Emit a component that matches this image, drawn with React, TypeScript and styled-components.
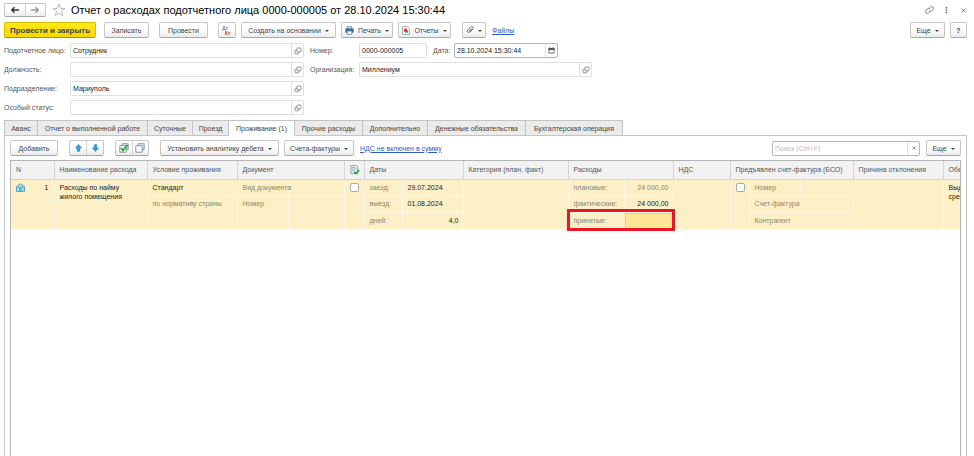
import React from 'react';
import styled, { createGlobalStyle, css } from 'styled-components';

const Global = createGlobalStyle`
  * { box-sizing: border-box; }
  html, body { margin: 0; background: #fff; }
  body, button, input { font-family: "Liberation Sans", Arial, sans-serif; font-size: 7px; line-height: 9px; color: #444; }
  svg { display: block; flex: none; }
`;

const Page = styled.main`
  display: flex;
  flex-direction: column;
  min-height: 100vh;
  padding: 0 7px 0 4px;
  overflow: hidden;
`;

const TitleBar = styled.header`
  display: flex;
  align-items: center;
  height: 20px;
  margin-bottom: 2px;
`;

const Title = styled.h1`
  margin: 0 0 0 5px;
  font-size: 11px;
  line-height: 14px;
  font-weight: 400;
  color: #000;
  white-space: nowrap;
`;

const Spacer = styled.div`
  flex: 1;
`;

const PlainButton = styled.button`
  display: flex;
  align-items: center;
  justify-content: center;
  width: 17px;
  height: 14px;
  padding: 0;
  border: 0;
  background: none;
`;

const WindowActions = styled.div`
  display: flex;
  margin-right: -5px;
`;

const Toolbar = styled.div`
  display: flex;
  align-items: center;
  height: 16px;
`;

const Button = styled.button<{ $w: number; $gap?: number; $primary?: boolean }>`
  display: flex;
  align-items: center;
  justify-content: center;
  gap: 4px;
  min-width: ${p => p.$w}px;
  height: 16px;
  margin: 0 ${p => p.$gap ?? 0}px 0 0;
  padding: 0;
  border: 1px solid #c6c6c6;
  border-bottom-color: #a8a8a8;
  border-radius: 2px;
  background: linear-gradient(#fff 40%, #ececec);
  white-space: nowrap;
  ${p => p.$primary && css`
    border-color: #d6bd00;
    border-bottom-color: #a89400;
    background: linear-gradient(#ffe817, #f5d900);
    font-size: 8px;
    font-weight: 700;
  `}
`;

const ButtonPair = styled.div<{ $w: number; $gap: number; $h?: number }>`
  display: flex;
  width: ${p => p.$w}px;
  height: ${p => p.$h ?? 16}px;
  margin-right: ${p => p.$gap}px;
  border: 1px solid #c6c6c6;
  border-bottom-color: #a8a8a8;
  border-radius: 2px;
  background: linear-gradient(#fff 40%, #ececec);
`;

const PairButton = styled.button`
  display: flex;
  flex: 1;
  align-items: center;
  justify-content: center;
  padding: 0;
  border: 0;
  background: none;
  & + & { border-left: 1px solid #d4d4d4; }
`;

const Caret = styled.span`
  width: 0;
  height: 0;
  margin-top: 1px;
  border: 2px solid transparent;
  border-top-color: #444;
  border-bottom: 0;
`;

const Link = styled.a`
  color: #2a5db8;
  text-decoration: underline;
  white-space: nowrap;
`;

const Form = styled.form`
  display: grid;
  row-gap: 4px;
  margin: 5px 0;
`;

const FormRow = styled.div`
  display: flex;
  align-items: center;
  height: 15px;
`;

const Label = styled.label<{ $w: number }>`
  width: ${p => p.$w}px;
  flex: none;
  color: #555;
  white-space: nowrap;
`;

const FieldBox = styled.div<{ $w: number; $strong?: boolean }>`
  display: flex;
  width: ${p => p.$w}px;
  height: 15px;
  margin-right: 6px;
  border: 1px solid ${p => (p.$strong ? '#b4b4b4' : '#dedede')};
  border-radius: 2px;
  background: #fff;
`;

const TextInput = styled.input`
  flex: 1;
  min-width: 0;
  padding: 0 2px;
  border: 0;
  outline: 0;
  background: none;
  color: #222;
  &::placeholder { color: #bbb; opacity: 1; }
`;

const FieldButton = styled.button`
  display: flex;
  align-items: center;
  justify-content: center;
  width: 12px;
  padding: 0;
  border: 0;
  border-left: 1px solid #dedede;
  background: none;
`;

const Tabs = styled.div`
  display: flex;
  height: 16px;
  margin-bottom: -1px;
  z-index: 1;
`;

const Tab = styled.button<{ $w: number; $active?: boolean }>`
  width: ${p => p.$w}px;
  padding: 0;
  border: 1px solid #c4c4c4;
  border-left-width: 0;
  background: ${p => (p.$active ? '#fff' : '#ebebeb')};
  border-bottom-color: ${p => (p.$active ? '#fff' : '#c4c4c4')};
  white-space: nowrap;
  &:first-child { border-left-width: 1px; }
`;

const Panel = styled.section`
  display: flex;
  flex: 1;
  flex-direction: column;
  padding: 4px 5px 0;
  border: 1px solid #c4c4c4;
  border-bottom: 0;
`;

const TableFrame = styled.div`
  flex: 1;
  margin-top: 4px;
  overflow: hidden;
  border: 1px solid #b4b4b4;
  border-bottom: 0;
`;

const Table = styled.table`
  width: 100%;
  border-collapse: collapse;
  table-layout: fixed;
`;

const Th = styled.th`
  height: 18px;
  padding: 0 0 0 5px;
  border-right: 1px solid #d6d6d6;
  border-bottom: 1px solid #d0d0d0;
  background: #f2f2f2;
  font-weight: 400;
  text-align: left;
  color: #555;
  white-space: nowrap;
  &:last-child { border-right: 0; }
`;

const Td = styled.td`
  height: 49px;
  padding: 0;
  border-right: 1px solid #fffae8;
  border-bottom: 1px solid #fffae8;
  background: #fef0c6;
  vertical-align: top;
  &:last-child { border-right: 0; }
`;

const Lines = styled.div<{ $cols?: string }>`
  position: relative;
  display: grid;
  height: 49px;
  grid-template-columns: ${p => p.$cols ?? '1fr'};
  grid-template-rows: 16px 17px 16px;
`;

const Cell = styled.div<{ $dim?: boolean; $right?: boolean; $b?: boolean; $r?: boolean; $wide?: boolean; $tall?: number }>`
  padding: 3px 4px 0 5px;
  color: ${p => (p.$dim ? '#8d8468' : '#222')};
  text-align: ${p => (p.$right ? 'right' : 'left')};
  white-space: nowrap;
  ${p => p.$b && 'border-bottom: 1px solid #fffae8;'}
  ${p => p.$r && 'border-right: 1px solid #fffae8;'}
  ${p => p.$wide && 'grid-column: 1 / -1;'}
  ${p => p.$tall && `grid-row: span ${p.$tall};`}
`;

const EdgeCell = styled(Cell)`
  padding-right: 0;
`;

const Check = styled.input`
  appearance: none;
  display: block;
  width: 9px;
  height: 9px;
  margin: 0 auto;
  border: 1px solid #aaa;
  border-radius: 2px;
  background: #fff;
`;

const AmountInput = styled.input`
  width: 100%;
  min-width: 0;
  height: 16px;
  padding: 0 4px;
  border: 1px solid #f7cf45;
  outline: 0;
  background: #fee695;
  text-align: right;
`;

const Highlight = styled.div`
  position: absolute;
  left: -2px;
  right: -2px;
  bottom: -2px;
  height: 22px;
  border: 3px solid #ec1526;
  pointer-events: none;
`;

const NumberCell = styled.div`
  display: flex;
  justify-content: space-between;
  padding: 3px 5px 0;
  color: #222;
`;

const Arrow = ({ left, color }: { left?: boolean; color: string }) => (
  <svg width="10" height="8" viewBox="0 0 10 8" fill="none" stroke={color} strokeWidth="1.4">
    {left ? <path d="M9 4H2M4.5 1.2 1.7 4l2.8 2.8" /> : <path d="M1 4h7M5.5 1.2 8.3 4 5.5 6.8" />}
  </svg>
);
const Star = () => (
  <svg width="14" height="14" viewBox="0 0 14 14" fill="none" stroke="#aaa" strokeWidth=".8">
    <path d="M7 1l1.5 4.4H13L9.400 8.200l1.400 4.500L7 10l-3.800 2.700 1.400-4.500L1 5.400h4.500z" />
  </svg>
);
const OpenIcon = () => (
  <svg width="8" height="8" viewBox="0 0 8 8" fill="none" stroke="#777" strokeWidth=".8">
    <rect x="3" y="1" width="4" height="3.800" rx=".6" />
    <path d="M3 3.200H1.600a.6.600 0 0 0-.6.600V6.200a.6.600 0 0 0 .6.600h2.600a.6.600 0 0 0 .6-.6V4.800" />
  </svg>
);
const CalendarIcon = () => (
  <svg width="7" height="7" viewBox="0 0 7 7">
    <path d="M.9 1.500h5.200v4.600H.9z" fill="#fff" stroke="#555" strokeWidth=".8" />
    <path d="M.5 1h6v2h-6zM1.500.2h1v1h-1zM4.500.2h1v1h-1z" fill="#555" />
  </svg>
);
const ChainIcon = () => (
  <svg width="11" height="10" viewBox="0 0 24 24" fill="none" stroke="#777" strokeWidth="2.200">
    <path d="M10 14a5 5 0 0 0 7.500.5l3-3a5 5 0 0 0-7-7L12 6M14 10a5 5 0 0 0-7.500-.5l-3 3a5 5 0 0 0 7 7L12 18" />
  </svg>
);
const DotsIcon = () => (
  <svg width="3" height="8" viewBox="0 0 3 8" fill="#555">
    <path d="M.7 1h1.500v1.400H.7zM.7 3.400h1.500v1.400H.7zM.7 5.800h1.500v1.400H.7z" />
  </svg>
);
const CrossIcon = ({ size }: { size: number }) => (
  <svg width={size} height={size} viewBox="0 0 5 5" stroke="#666" strokeWidth=".9">
    <path d="M.6.6l3.800 3.800M4.400.6.600 4.400" />
  </svg>
);
const DebitIcon = () => (
  <svg width="10" height="11" viewBox="0 0 10 11" fontFamily="Liberation Sans" fontSize="5" fontWeight="700">
    <text x="0" y="5" fill="#4f8fb5">Дт</text>
    <text x="3" y="10" fill="#d2343a">Кт</text>
  </svg>
);
const PrinterIcon = () => (
  <svg width="9" height="9" viewBox="0 0 9 9">
    <path d="M2.200.7h4.600V3H2.200z" fill="#dbe7ef" stroke="#47718f" strokeWidth=".7" />
    <rect x=".3" y="2.500" width="8.400" height="4.200" rx=".9" fill="#3f6f92" />
    <path d="M2.200 5h4.600v3.300H2.200z" fill="#fff" stroke="#47718f" strokeWidth=".7" />
  </svg>
);
const ReportIcon = () => (
  <svg width="8" height="9" viewBox="0 0 8 9">
    <path d="M.5.5h5l2 2v6h-7z" fill="#fff" stroke="#8a9aa6" strokeWidth=".8" />
    <path d="M3 4.500h3.200v2.300H2.500z" fill="#4ea45a" />
    <path d="M2 2.500h2.600L5.600 5 2 6z" fill="#e03a34" />
  </svg>
);
const ClipIcon = () => (
  <svg width="8" height="8" viewBox="0 0 8 8" fill="none" stroke="#666" strokeWidth=".9">
    <path d="M6.300 3 3.500 6a1.300 1.300 0 0 1-2-1.800L4.600 1a1.500 1.500 0 0 1 2.300 2L4 6.400M5.300 2.500 2.700 5.200" />
  </svg>
);
const MoveIcon = ({ down }: { down?: boolean }) => (
  <svg width="7" height="8" viewBox="0 0 7 8" fill="#2d9bea" stroke="#1779bd" strokeWidth=".6">
    <path d={down ? 'M3.500 7.400.600 4h1.700V.700h2.400V4h1.700z' : 'M3.500.600.600 4h1.700v3.300h2.400V4h1.700z'} />
  </svg>
);
const StackIcon = ({ checked }: { checked?: boolean }) => (
  <svg width="10" height="10" viewBox="0 0 10 10" fill="#fff" stroke="#6d8798" strokeWidth=".8">
    <path d="M3 .7h6.200v6H3z" fill="#dce8ef" />
    <path d="M.8 2.700h6.400v6.500H.8z" />
    {checked && <path d="M2 5l2 2.500L8.500 2" fill="none" stroke="#29a62f" strokeWidth="1.800" />}
  </svg>
);
const SheetCheckIcon = () => (
  <svg width="10" height="10" viewBox="0 0 10 10" fill="none">
    <path d="M.900.600h5.500l1 1v7H.900z" fill="#eef5fa" stroke="#7089a0" strokeWidth=".8" />
    <path d="M2.300 2.500h2.500M2.300 4h3.500M2.300 5.500h2" stroke="#5c7ea0" strokeWidth=".7" />
    <path d="M4.200 6.600l1.900 2L9.200 5" stroke="#26a435" strokeWidth="1.600" />
  </svg>
);
const HouseIcon = () => (
  <svg width="9" height="9" viewBox="0 0 9 9">
    <path d="M.5 3.600 4.500.600l4 3v4.800h-8z" fill="#a9dcf1" stroke="#2b9bc6" strokeWidth=".8" />
    <path d="M1.500 4.200h6" stroke="#2b9bc6" strokeWidth=".7" />
    <path d="M3.200 5h2.600v3.400H3.200z" fill="#3ba6cf" />
    <path d="M4 6h1v1H4z" fill="#fff" />
  </svg>
);

type FieldProps = { id: string; label: string; value: string; labelW: number; w: number; icon?: React.ReactNode; strong?: boolean };
const Field = ({ id, label, value, labelW, w, icon, strong }: FieldProps) => (
  <>
    <Label htmlFor={id} $w={labelW}>{label}</Label>
    <FieldBox $w={w} $strong={strong}>
      <TextInput id={id} defaultValue={value} />
      {icon && <FieldButton type="button" aria-label={`Выбрать: ${label}`}>{icon}</FieldButton>}
    </FieldBox>
  </>
);

const tabs: [string, number][] = [
  ['Аванс', 34], ['Отчет о выполненной работе', 110], ['Суточные', 45], ['Проезд', 36], ['Проживание (1)', 66],
  ['Прочие расходы', 68], ['Дополнительно', 65], ['Денежные обязательства', 98], ['Бухгалтерская операция', 97],
];

const columns: [React.ReactNode, number?][] = [
  ['N', 43], ['Наименование расхода', 93], ['Условие проживания', 90], ['Документ', 107], [<SheetCheckIcon key="i" />, 20],
  ['Даты', 99], ['Категория (план, факт)', 105], ['Расходы', 105], ['НДС', 57], ['Предъявлен счет-фактура (БСО)', 123],
  ['Причина отклонения', 90], ['Обе'],
];

export default function App() {
  return (
    <Page>
      <Global />
      <TitleBar>
        <ButtonPair $w={42} $gap={6} $h={14}>
          <PairButton aria-label="Назад"><Arrow left color="#333" /></PairButton>
          <PairButton aria-label="Вперед"><Arrow color="#999" /></PairButton>
        </ButtonPair>
        <Star />
        <Title>Отчет о расходах подотчетного лица 0000-000005 от 28.10.2024 15:30:44</Title>
        <Spacer />
        <WindowActions>
          <PlainButton aria-label="Ссылка"><ChainIcon /></PlainButton>
          <PlainButton aria-label="Меню"><DotsIcon /></PlainButton>
          <PlainButton aria-label="Закрыть"><CrossIcon size={5} /></PlainButton>
        </WindowActions>
      </TitleBar>

      <Toolbar>
        <Button $w={92} $gap={8} $primary>Провести и закрыть</Button>
        <Button $w={45} $gap={10}>Записать</Button>
        <Button $w={49} $gap={10}>Провести</Button>
        <Button $w={18} $gap={5} aria-label="Показать проводки"><DebitIcon /></Button>
        <Button $w={95} $gap={5}>Создать на основании<Caret /></Button>
        <Button $w={52} $gap={5}><PrinterIcon />Печать<Caret /></Button>
        <Button $w={53} $gap={11}><ReportIcon />Отчеты<Caret /></Button>
        <Button $w={24} $gap={6} aria-label="Вложения"><ClipIcon /><Caret /></Button>
        <Link href="#files">Файлы</Link>
        <Spacer />
        <Button $w={35} $gap={5}>Еще<Caret /></Button>
        <Button $w={17}><b>?</b></Button>
      </Toolbar>

      <Form>
        <FormRow>
          <Field id="person" label="Подотчетное лицо:" value="Сотрудник" labelW={66} w={234} icon={<OpenIcon />} />
          <Field id="number" label="Номер:" value="0000-000005" labelW={49} w={68} />
          <Field id="date" label="Дата:" value="28.10.2024 15:30:44" labelW={21} w={104} icon={<CalendarIcon />} strong />
        </FormRow>
        <FormRow>
          <Field id="post" label="Должность:" value="" labelW={66} w={234} icon={<OpenIcon />} />
          <Field id="org" label="Организация:" value="Миллениум" labelW={49} w={233} icon={<OpenIcon />} />
        </FormRow>
        <FormRow>
          <Field id="dept" label="Подразделение:" value="Мариуполь" labelW={66} w={234} icon={<OpenIcon />} />
        </FormRow>
        <FormRow>
          <Field id="status" label="Особый статус:" value="" labelW={66} w={234} icon={<OpenIcon />} />
        </FormRow>
      </Form>

      <Tabs role="tablist">
        {tabs.map(([name, w], i) => (
          <Tab key={name} role="tab" aria-selected={i === 4} $w={w} $active={i === 4}>{name}</Tab>
        ))}
      </Tabs>

      <Panel>
        <Toolbar>
          <Button $w={48} $gap={11}>Добавить</Button>
          <ButtonPair $w={35} $gap={11}>
            <PairButton aria-label="Вверх"><MoveIcon /></PairButton>
            <PairButton aria-label="Вниз"><MoveIcon down /></PairButton>
          </ButtonPair>
          <ButtonPair $w={34} $gap={11}>
            <PairButton aria-label="Отметить все"><StackIcon checked /></PairButton>
            <PairButton aria-label="Снять отметки"><StackIcon /></PairButton>
          </ButtonPair>
          <Button $w={119} $gap={5}>Установить аналитику дебета<Caret /></Button>
          <Button $w={70} $gap={6}>Счета-фактуры<Caret /></Button>
          <Link href="#vat">НДС не включен в сумму</Link>
          <Spacer />
          <FieldBox $w={148} $strong>
            <TextInput aria-label="Поиск" placeholder="Поиск (Ctrl+F)" />
            <FieldButton aria-label="Очистить"><CrossIcon size={4} /></FieldButton>
          </FieldBox>
          <Button $w={35}>Еще<Caret /></Button>
        </Toolbar>

        <TableFrame>
          <Table>
            <colgroup>
              {columns.map(([, w], i) => <col key={i} width={w} />)}
            </colgroup>
            <thead>
              <tr>{columns.map(([name], i) => <Th key={i}>{name}</Th>)}</tr>
            </thead>
            <tbody>
              <tr>
                <Td><NumberCell><HouseIcon /><span>1</span></NumberCell></Td>
                <Td><Cell>Расходы по найму<br />жилого помещения</Cell></Td>
                <Td>
                  <Lines>
                    <Cell $b>Стандарт</Cell>
                    <Cell $dim $tall={2}>по нормативу страны</Cell>
                  </Lines>
                </Td>
                <Td>
                  <Lines $cols="51px 1fr">
                    <Cell $dim $b $wide>Вид документа</Cell>
                    <Cell $dim $r $tall={2}>Номер</Cell>
                  </Lines>
                </Td>
                <Td><Cell><Check type="checkbox" aria-label="Документ принят" /></Cell></Td>
                <Td>
                  <Lines $cols="38px 1fr">
                    <Cell $dim $b $r>заезд:</Cell><Cell $b>29.07.2024</Cell>
                    <Cell $dim $b $r>выезд:</Cell><Cell $b>01.08.2024</Cell>
                    <Cell $dim $r>дней:</Cell><Cell $right>4,0</Cell>
                  </Lines>
                </Td>
                <Td />
                <Td>
                  <Lines $cols="56px 1fr">
                    <Cell $dim $b $r>плановые:</Cell><Cell $dim $b $right>24 000,00</Cell>
                    <Cell $dim $b $r>фактические:</Cell><Cell $b $right>24 000,00</Cell>
                    <Cell as="label" htmlFor="accepted" $dim>принятые:</Cell><AmountInput id="accepted" />
                    <Highlight />
                  </Lines>
                </Td>
                <Td />
                <Td>
                  <Lines $cols="19px 51px 1fr">
                    <Cell $r $tall={3}><Check type="checkbox" aria-label="Предъявлен счет-фактура" /></Cell>
                    <Cell $dim $b $r>Номер</Cell><Cell $b />
                    <Cell $dim $b>Счет-фактура</Cell><Cell $b />
                    <Cell $dim>Контрагент</Cell>
                  </Lines>
                </Td>
                <Td />
                <Td><EdgeCell>Выд<br />сре</EdgeCell></Td>
              </tr>
            </tbody>
          </Table>
        </TableFrame>
      </Panel>
    </Page>
  );
}
